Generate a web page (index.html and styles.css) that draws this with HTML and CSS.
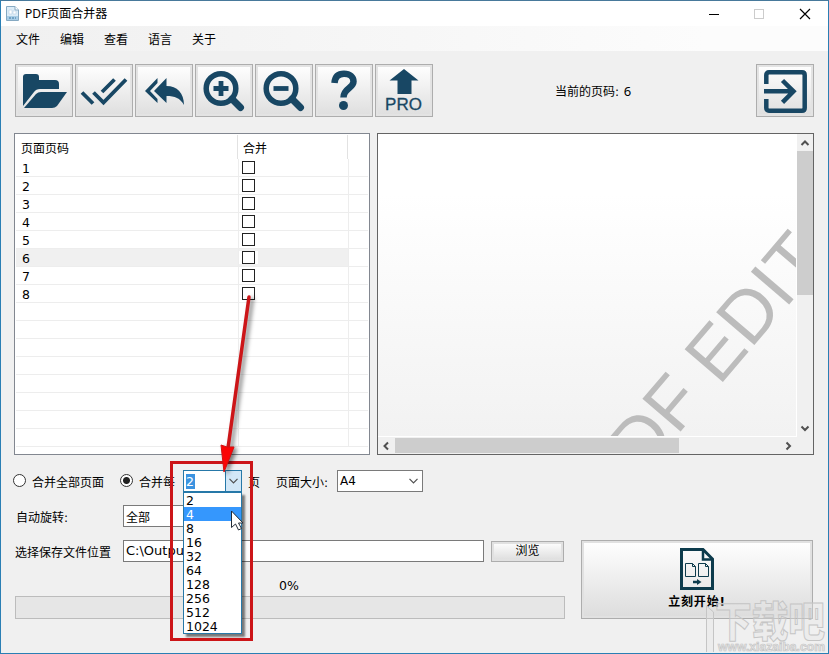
FILE: index.html
```html
<!DOCTYPE html>
<html lang="zh-CN">
<head>
    <meta charset="UTF-8">
    <meta name="viewport" content="width=device-width, initial-scale=1.0">
    <title>PDF页面合并器</title>
    <link rel="stylesheet" href="styles.css">
</head>
<body>
    <div class="window">
        <div class="titlebar">
            <svg class="app-icon" width="13" height="15" viewBox="0 0 13 15">
                <path d="M.5 .5H9L12.500 4V14.500H.5Z" fill="#dcecf7" stroke="#86a9c2"/>
                <path d="M9 .5V4H12.500" fill="#fff" stroke="#86a9c2"/>
                <path d="M3 4H6V8H3ZM7 5H10V8H7Z" fill="#fff" stroke="#b8d2e4" stroke-width=".6"/>
                <path d="M1 10H12V14H1Z" fill="#a9cde6"/>
                <path d="M3 12H10" stroke="#3878a4" stroke-dasharray="2 1"/>
            </svg>
            <span class="title">PDF页面合并器</span>
            <svg class="window-controls" width="104" height="12" viewBox="0 0 104 12" fill="none">
                <path d="M0 6.500H10" stroke="#000"/>
                <rect x="45.500" y="1.500" width="9" height="9" stroke="#ccc"/>
                <path d="M91 1L101 11M101 1L91 11" stroke="#000" stroke-width="1.200"/>
            </svg>
        </div>

        <div class="menu">
            <span>文件</span>
            <span>编辑</span>
            <span>查看</span>
            <span>语言</span>
            <span>关于</span>
        </div>

        <div class="toolbar">
            <button class="tool">
                <svg width="56" height="51" viewBox="0 0 56 51" fill="#184764">
                    <path d="M7 41V12Q7 9 10 9H20Q23 9 23 12V15H39Q43 15 43 19V24H24Q20 24 18 27Z"/>
                    <path d="M8 43L20 29Q22 27 25 27H51L41 41Q39 43 36 43Z"/>
                </svg>
            </button>
            <button class="tool">
                <svg width="56" height="51" viewBox="0 0 56 51" fill="none" stroke="#184764" stroke-width="3.800">
                    <path d="M6 27.500L17 38.500M17.500 27.500L27.500 37.500L50 14.500M26 27L38.500 14.500"/>
                </svg>
            </button>
            <button class="tool">
                <svg width="56" height="51" viewBox="0 0 56 51" fill="#184764">
                    <path d="M18 26L30.500 13V21C41 21 48 28 48 40C44 33 39 31 30.500 31V38Z"/>
                    <path d="M9 26L21.500 13V18L14 26L21.500 34V38Z"/>
                </svg>
            </button>
            <button class="tool">
                <svg width="56" height="51" viewBox="0 0 56 51" fill="none" stroke="#184764">
                    <circle cx="25" cy="23.500" r="14.800" stroke-width="5.500"/>
                    <path d="M36 34L44.500 42.500" stroke-width="7" stroke-linecap="round"/>
                    <path d="M17.500 23.500H32.500M25 16V31" stroke-width="4.800"/>
                </svg>
            </button>
            <button class="tool">
                <svg width="56" height="51" viewBox="0 0 56 51" fill="none" stroke="#184764">
                    <circle cx="25" cy="23.500" r="14.800" stroke-width="5.500"/>
                    <path d="M36 34L44.500 42.500" stroke-width="7" stroke-linecap="round"/>
                    <path d="M17.500 23.500H32.500" stroke-width="4.800"/>
                </svg>
            </button>
            <button class="tool">
                <svg width="56" height="51" viewBox="0 0 56 51" fill="none" stroke="#184764">
                    <path d="M18.500 18C19 11.500 22.500 8.800 28 8.800C34 8.800 37.500 12 37.500 16.500C37.500 23.500 27.500 23 27.500 32.500" stroke-width="6.500"/>
                    <circle cx="27.500" cy="40.500" r="4.500" fill="#184764" stroke="none"/>
                </svg>
            </button>
            <button class="tool">
                <svg width="56" height="51" viewBox="0 0 56 51" fill="#184764">
                    <path d="M28 4L42.500 15.500H35.500V29H21.500V15.500H13.500Z"/>
                    <text class="pro" x="9" y="45" textLength="37">PRO</text>
                </svg>
            </button>
            <span class="current-page">当前的页码: <span class="page-number">6</span></span>
            <button class="tool exit">
                <svg width="56" height="51" viewBox="0 0 56 51" fill="none" stroke="#184764" stroke-width="4.500">
                    <path d="M9.300 19V10Q9.300 7.300 12 7.300H45Q47.700 7.300 47.700 10V43Q47.700 45.700 45 45.700H12Q9.300 45.700 9.300 43V34"/>
                    <path d="M7 26.300H36M25.500 15.500L36.500 26.300L25.500 37.300"/>
                </svg>
            </button>
        </div>

        <div class="panels">
            <div class="page-list">
                <div class="row head"><span class="cell number">页面页码</span><span class="cell merge">合并</span></div>
                <div class="row"><span class="cell number">1</span><span class="cell merge"><i class="check"></i></span></div>
                <div class="row"><span class="cell number">2</span><span class="cell merge"><i class="check"></i></span></div>
                <div class="row"><span class="cell number">3</span><span class="cell merge"><i class="check"></i></span></div>
                <div class="row"><span class="cell number">4</span><span class="cell merge"><i class="check"></i></span></div>
                <div class="row"><span class="cell number">5</span><span class="cell merge"><i class="check"></i></span></div>
                <div class="row selected"><span class="cell number">6</span><span class="cell merge"><i class="check"></i></span></div>
                <div class="row"><span class="cell number">7</span><span class="cell merge"><i class="check"></i></span></div>
                <div class="row"><span class="cell number">8</span><span class="cell merge"><i class="check"></i></span></div>
                <div class="row"><span class="cell number"></span><span class="cell merge"></span></div>
                <div class="row"><span class="cell number"></span><span class="cell merge"></span></div>
                <div class="row"><span class="cell number"></span><span class="cell merge"></span></div>
                <div class="row"><span class="cell number"></span><span class="cell merge"></span></div>
                <div class="row"><span class="cell number"></span><span class="cell merge"></span></div>
                <div class="row"><span class="cell number"></span><span class="cell merge"></span></div>
                <div class="row"><span class="cell number"></span><span class="cell merge"></span></div>
                <div class="row"><span class="cell number"></span><span class="cell merge"></span></div>
            </div>

            <div class="preview">
                <div class="page">
                    <svg width="418" height="302" viewBox="378 134 418 302">
                        <text class="stamp" transform="translate(611 513) rotate(-49.500)">PDF EDITOR</text>
                    </svg>
                </div>
                <div class="scroll-v">
                    <svg width="16" height="17" viewBox="0 0 16 17"><path d="M4.500 11L8 7.500L11.500 11"/></svg>
                    <div class="thumb"></div>
                    <svg width="16" height="17" viewBox="0 0 16 17"><path d="M4.500 6.500L8 10L11.500 6.500"/></svg>
                </div>
                <div class="scroll-h">
                    <svg width="17" height="16" viewBox="0 0 17 16"><path d="M10 4.500L6.500 8L10 11.500"/></svg>
                    <div class="thumb"></div>
                    <svg width="17" height="16" viewBox="0 0 17 16"><path d="M6.500 4.500L10 8L6.500 11.500"/></svg>
                </div>
            </div>
        </div>

        <div class="bottom">
            <div class="options">
                <div class="line">
                    <i class="radio"></i>
                    <span class="all-label">合并全部页面</span>
                    <i class="radio on"></i>
                    <span class="every-label">合并每</span>
                    <div class="combo active">
                        <span class="value">2</span>
                        <span class="drop"><svg width="9" height="6" viewBox="0 0 9 6"><path d="M.5 .8L4.500 4.800L8.500 .8"/></svg></span>
                        <div class="dropdown">
                            <div class="item">2</div>
                            <div class="item hover">4</div>
                            <div class="item">8</div>
                            <div class="item">16</div>
                            <div class="item">32</div>
                            <div class="item">64</div>
                            <div class="item">128</div>
                            <div class="item">256</div>
                            <div class="item">512</div>
                            <div class="item">1024</div>
                        </div>
                    </div>
                    <span class="unit">页</span>
                    <span class="size-label">页面大小:</span>
                    <div class="combo size">
                        <span>A4</span>
                        <svg width="9" height="6" viewBox="0 0 9 6"><path d="M.5 .8L4.500 4.800L8.500 .8"/></svg>
                    </div>
                </div>
                <div class="line rotate">
                    <span class="label">自动旋转:</span>
                    <div class="combo rotation">全部</div>
                </div>
                <div class="line save">
                    <span class="label path-label">选择保存文件位置</span>
                    <div class="path">C:\Output\</div>
                    <button class="browse">浏览</button>
                </div>
                <div class="percent">0%</div>
                <div class="progress"></div>
            </div>
            <button class="start">
                <svg width="34" height="42" viewBox="0 0 34 42" fill="none" stroke="#0d3b4c">
                    <path d="M1.500 1.500H23L32.500 11V40.500H1.500Z" stroke-width="3"/>
                    <path d="M23 1.500V11.500H32.500" stroke-width="2.500"/>
                    <path d="M5.500 15.500H12.500L15.500 18.500V28.500H5.500ZM18.500 15.500H25.500L28.500 18.500V28.500H18.500ZM12.500 15.500V18.500H15.500M25.500 15.500V18.500H28.500"/>
                    <path d="M13 34H18" stroke-width="2.500"/>
                    <path d="M17 31L21.500 34L17 37Z" fill="#0d3b4c" stroke="none"/>
                </svg>
                <span>立刻开始!</span>
            </button>
        </div>
    </div>

    <svg class="overlay" width="829" height="654" viewBox="0 0 829 654">
        <g class="site-mark">
            <path d="M706.500 652V606L713.500 612V652"/>
            <text class="site-name" x="715" y="637" textLength="110" lengthAdjust="spacingAndGlyphs">下载吧</text>
            <text class="site-url" x="718" y="651" textLength="107" lengthAdjust="spacingAndGlyphs">www.xiazaiba.com</text>
        </g>
        <rect x="171.500" y="462.500" width="80" height="177" fill="none" stroke="#cc1518" stroke-width="3"/>
        <g class="pointer">
            <path d="M249 297L228 448" fill="none" stroke="#cc1518" stroke-width="3.500" stroke-linecap="round"/>
            <path d="M221 445L227 447L234 447L224 472Z" fill="#fa0505" stroke="#d41010"/>
        </g>
        <path d="M231.500 511V527.500L235.500 524L238.500 530L241.500 528.500L238.500 523H243Z" fill="#fff" stroke="#222c38"/>
    </svg>
</body>
</html>
```
FILE: styles.css
```css
body {
    margin: 0;
    font-family: "DejaVu Sans", "Noto Sans CJK SC", sans-serif;
    font-size: 12px;
    color: #000;
}

button {
    font: inherit;
    color: inherit;
    padding: 0;
    border-radius: 0;
}

.window {
    box-sizing: border-box;
    width: 829px;
    height: 654px;
    display: flex;
    flex-direction: column;
    background: #f0f0f0;
    border: 1px solid #2a7fb4;
    border-top-color: #47799b;
    overflow: hidden;
}

.titlebar {
    height: 25px;
    display: flex;
    align-items: center;
    background: #fff;
    padding: 0 15px 0 5px;
}

.title {
    font-family: "Noto Sans", "Noto Sans CJK SC", sans-serif;
    margin: -2px 0 0 6px;
}

.window-controls {
    margin-left: auto;
}

.menu {
    height: 25px;
    display: flex;
    align-items: center;
    gap: 20px;
    padding-left: 15px;
    background: linear-gradient(to right, #f0f0f0, #fcfcfc 85%);
}

.toolbar {
    display: flex;
    gap: 2px;
    padding: 13px 14px 0;
}

.tool {
    box-sizing: border-box;
    width: 58px;
    height: 53px;
    border: 1px solid #adadad;
    background: linear-gradient(#fff, #dedede);
    box-shadow: inset 0 0 0 2px #e3e3e3;
}

.tool svg {
    display: block;
}

.pro {
    font: 17px "Liberation Sans", sans-serif;
    stroke: #184764;
    stroke-width: .3px;
}

.current-page {
    align-self: center;
    margin-left: 120px;
}

.page-number {
    font-family: "Noto Sans", sans-serif;
    font-size: 13px;
    margin-left: 1px;
}

.exit {
    margin-left: auto;
}

.panels {
    display: flex;
    gap: 7px;
    padding: 16px 14px 0 13px;
}

.page-list {
    box-sizing: border-box;
    width: 356px;
    height: 322px;
    background: #fff;
    border: 1px solid #828790;
    padding: 1px;
    overflow: hidden;
}

.row {
    box-sizing: border-box;
    height: 18px;
    display: flex;
    border-bottom: 1px solid #ededed;
    font-size: 12.5px;
}

.cell {
    box-sizing: border-box;
    display: flex;
    align-items: center;
    border-right: 1px solid #ededed;
}

.number {
    width: 223px;
    padding-left: 6px;
    padding-top: 1px;
}

.merge {
    width: 110px;
    padding-left: 3px;
}

.head {
    height: 24px;
    border-bottom: none;
    font-size: 12px;
}

.head .cell {
    border-color: #e2e2e2;
    padding-left: 5px;
    padding-top: 1px;
}

.head .number {
    width: 222px;
}

.selected .cell {
    background: #f0f0f0;
}

.check {
    box-sizing: border-box;
    width: 13px;
    height: 13px;
    background: #fff;
    border: 1px solid #222;
}

.selected .check {
    box-shadow: 3px 0 #fff, -3px 0 #fff;
}

.preview {
    box-sizing: border-box;
    width: 437px;
    height: 322px;
    display: grid;
    grid-template-columns: 419px 16px;
    grid-template-rows: 303px 17px;
    background: #f0f0f0;
    border: 1px solid #646464;
}

.page {
    background: linear-gradient(#fff 20%, #f2f2f2);
    border-right: 1px solid #fff;
    border-bottom: 1px solid #fff;
    overflow: hidden;
}

.page svg {
    display: block;
}

.stamp {
    font: 73px "Liberation Sans", sans-serif;
    fill: #bcbcbc;
}

.scroll-v {
    display: flex;
    flex-direction: column;
    justify-content: space-between;
}

.scroll-v .thumb {
    height: 144px;
    background: #cdcdcd;
    margin-bottom: auto;
}

.scroll-h {
    display: flex;
    align-items: center;
}

.scroll-h .thumb {
    width: 284px;
    height: 15px;
    background: #cdcdcd;
    margin-right: auto;
}

.scroll-v path,
.scroll-h path {
    fill: none;
    stroke: #505050;
    stroke-width: 2px;
}

.bottom {
    display: flex;
    justify-content: space-between;
    padding: 15px 15px 0 12px;
}

.options {
    width: 552px;
}

.line {
    display: flex;
    align-items: center;
    height: 22px;
    white-space: nowrap;
}

.radio {
    box-sizing: border-box;
    width: 13px;
    height: 13px;
    flex: none;
    background: #fff;
    border: 1px solid #333;
    border-radius: 50%;
    margin-bottom: 2px;
}

.on {
    background: radial-gradient(circle, #222 0 3px, #fff 4px);
}

.all-label {
    width: 82px;
    margin-left: 6px;
    margin-right: 6px;
}

.every-label {
    width: 38px;
    margin-left: 6px;
    margin-right: 6px;
}

.combo {
    position: relative;
    box-sizing: border-box;
    height: 22px;
    display: flex;
    align-items: center;
    background: #fff;
    border: 1px solid #7a7a7a;
}

.combo path {
    fill: none;
    stroke: #505050;
    stroke-width: 1.200px;
}

.active {
    width: 59px;
    border-color: #2678a8;
    justify-content: space-between;
    padding-left: 2px;
    font-size: 12.5px;
}

.value {
    background: #3b93e0;
    color: #fff;
    width: 9px;
    line-height: 15px;
}

.drop {
    display: flex;
    align-items: center;
    justify-content: center;
    width: 15px;
    height: 20px;
    background: #d2e7f7;
    border-left: 1px solid #2678a8;
}

.dropdown {
    position: absolute;
    z-index: 1;
    left: -1px;
    top: 21px;
    box-sizing: border-box;
    width: 59px;
    background: #fff;
    border: 1px solid #2678a8;
    box-shadow: 3px 3px 2px rgba(0, 0, 0, 0.5);
}

.item {
    box-sizing: border-box;
    height: 14px;
    line-height: 15px;
    padding-left: 2px;
}

.hover {
    background: #3597fd;
    color: #fff;
}

.unit {
    margin-left: 6px;
}

.size-label {
    width: 55px;
    margin-left: 16px;
    margin-right: 6px;
}

.size {
    width: 86px;
    justify-content: space-between;
    padding: 0 4px 0 2px;
}

.rotate {
    margin-top: 13px;
}

.save {
    margin-top: 13px;
}

.label {
    width: 107px;
    padding-left: 3px;
}

.path-label {
    width: 108px;
    padding-left: 2px;
}

.rotation {
    width: 110px;
    padding-left: 2px;
}

.path {
    box-sizing: border-box;
    width: 361px;
    height: 22px;
    line-height: 20px;
    font-size: 13px;
    padding-left: 2px;
    background: #fff;
    border: 1px solid #7a7a7a;
}

.browse {
    width: 73px;
    height: 21px;
    margin-left: 7px;
    line-height: 17px;
    border: 1px solid #adadad;
    background: linear-gradient(#fff, #dcdcdc);
    box-shadow: inset 0 0 0 2px #e1e1e1;
}

.percent {
    padding: 17px 0 0 266px;
    line-height: 14px;
    font-size: 12.5px;
}

.progress {
    box-sizing: border-box;
    width: 550px;
    height: 23px;
    margin: 3px 0 0 2px;
    background: #e6e6e6;
    border: 1px solid #bcbcbc;
}

.start {
    box-sizing: border-box;
    width: 232px;
    height: 79px;
    margin-top: 70px;
    display: flex;
    flex-direction: column;
    align-items: center;
    font-weight: bold;
    border: 1px solid #adadad;
    background: linear-gradient(#fff, #dcdcdc);
    box-shadow: inset 0 0 0 2px #e1e1e1;
    padding-top: 7px;
}

.start span {
    line-height: 18px;
    margin-top: 3px;
    letter-spacing: .8px;
}

.overlay {
    position: absolute;
    left: 0;
    top: 0;
    z-index: 2;
}

.site-mark {
    fill: rgba(230, 230, 230, 0.35);
    stroke: #c5c5c5;
    stroke-width: 1px;
}

.site-name {
    font: 900 42px "Noto Sans CJK SC", sans-serif;
}

.site-url {
    font: bold 12px "Liberation Sans", sans-serif;
    stroke-width: .7px;
}

.pointer {
    filter: drop-shadow(3px 2px 2px rgba(0, 0, 0, 0.5));
}
```
